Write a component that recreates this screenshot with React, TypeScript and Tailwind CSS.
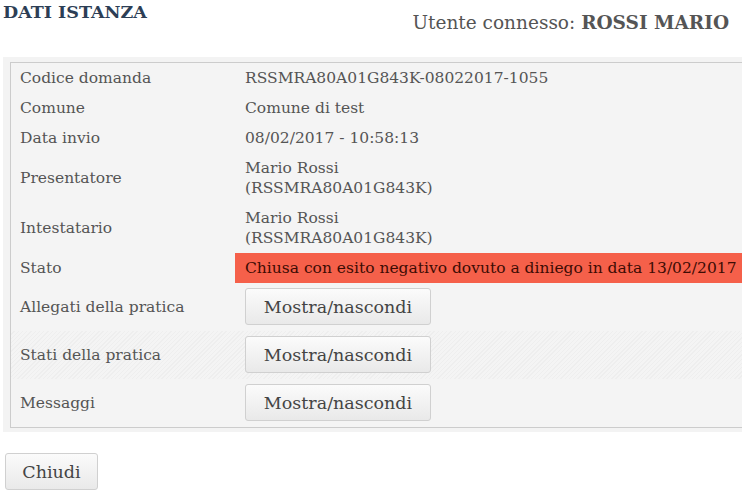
import React from "react";

const serif = "font-['DejaVu_Serif','Liberation_Serif',serif]";

function Row({ label, children, hatch = false }: { label: string; children: React.ReactNode; hatch?: boolean }) {
  return (
    <div
      className={`flex ${hatch ? "bg-[repeating-linear-gradient(135deg,#f4f4f4_0px,#f4f4f4_2px,#eeeeee_2px,#eeeeee_3px)]" : ""}`}
    >
      <div className="flex w-[224px] shrink-0 items-center pl-[9px] pr-[10px] py-[5px]">{label}</div>
      <div className="flex flex-1 items-center">{children}</div>
    </div>
  );
}

function Value({ children }: { children: React.ReactNode }) {
  return <div className="px-[10px] py-[5px]">{children}</div>;
}

function ToggleButton({ label, className = "" }: { label: string; className?: string }) {
  return (
    <button
      className={`h-[37px] rounded-[3px] border border-[#d0d0d0] bg-[linear-gradient(#fbfbfb,#e9e9e9)] text-[17.5px] text-[#444] ${className}`}
    >
      {label}
    </button>
  );
}

export default function App() {
  return (
    <div className={`relative h-[494px] w-[742px] overflow-hidden bg-white ${serif} text-[15.5px] leading-[20px] text-[#555]`}>
      <div className="flex items-start justify-between">
        <h1 className="pl-[3px] pt-[1px] text-[17.5px] font-bold leading-[22px] text-[#2c3e55]">DATI ISTANZA</h1>
        <div className="pr-[13px] pt-[11px] text-[18.5px] leading-[24px] text-[#555]">
          Utente connesso: <span className="font-bold">ROSSI MARIO</span>
        </div>
      </div>

      <div className="ml-[3px] mt-[22px] w-[780px] bg-[#f3f3f3] pb-[4px] pl-[7px] pt-[5px]">
        <div className="border border-[#cccccc] bg-[#f4f4f4]">
          <Row label="Codice domanda">
            <Value>RSSMRA80A01G843K-08022017-1055</Value>
          </Row>
          <Row label="Comune">
            <Value>Comune di test</Value>
          </Row>
          <Row label="Data invio">
            <Value>08/02/2017 - 10:58:13</Value>
          </Row>
          <Row label="Presentatore">
            <Value>
              Mario Rossi
              <br />
              (RSSMRA80A01G843K)
            </Value>
          </Row>
          <Row label="Intestatario">
            <Value>
              Mario Rossi
              <br />
              (RSSMRA80A01G843K)
            </Value>
          </Row>
          <Row label="Stato">
            <div className="w-full bg-[#f5604a] px-[10px] py-[5px] text-[#3d0c04]">
              Chiusa con esito negativo dovuto a diniego in data 13/02/2017
            </div>
          </Row>
          <Row label="Allegati della pratica">
            <div className="px-[10px] pb-[6px] pt-[5px]">
              <ToggleButton label="Mostra/nascondi" className="w-[186px]" />
            </div>
          </Row>
          <Row label="Stati della pratica" hatch>
            <div className="px-[10px] pb-[6px] pt-[5px]">
              <ToggleButton label="Mostra/nascondi" className="w-[186px]" />
            </div>
          </Row>
          <Row label="Messaggi">
            <div className="px-[10px] pb-[6px] pt-[5px]">
              <ToggleButton label="Mostra/nascondi" className="w-[186px]" />
            </div>
          </Row>
        </div>
      </div>

      <div className="pl-[5px] pt-[21px]">
        <ToggleButton label="Chiudi" className="w-[93px]" />
      </div>
    </div>
  );
}
